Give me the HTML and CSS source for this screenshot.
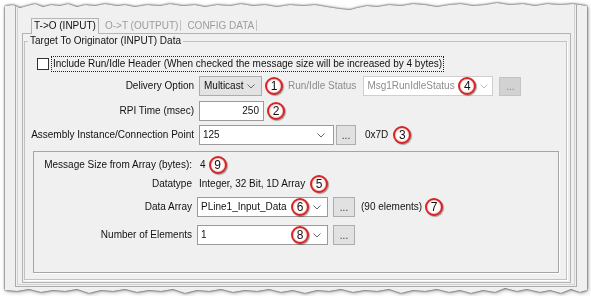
FILE: index.html
```html
<!DOCTYPE html>
<html lang="en">
<head>
    <meta charset="UTF-8">
    <title>Target To Originator (INPUT) Data</title>
    <link rel="stylesheet" href="styles.css">
</head>
<body>
    <div class="sheet">
        <div class="paper">
            <div class="frame">
                <div class="frame-in">
                    <div class="tabs">
                        <div class="tab active">T-&gt;O (INPUT)</div>
                        <div class="tab">O-&gt;T (OUTPUT)</div>
                        <div class="tab">CONFIG DATA</div>
                    </div>
                    <div class="page">
                        <fieldset class="group">
                            <legend>Target To Originator (INPUT) Data</legend>
                            <label class="check"><span class="box"></span><span class="focus">Include Run/Idle Header (When checked the message size will be increased by 4 bytes)</span></label>

                            <div class="row row-delivery">
                                <span class="lbl">Delivery Option</span>
                                <div class="combo drop w-delivery"><span class="txt">Multicast</span><svg class="chev" width="8" height="5" viewBox="0 0 8 5"><path d="M.5 .5 4 4 7.5 .5" fill="none" stroke="#666"/></svg></div>
                                <span class="num after">1</span>
                                <span class="dim">Run/Idle Status</span>
                                <div class="combo disabled w-status"><span class="txt">Msg1RunIdleStatus</span><span class="num inside">4</span><svg class="chev" width="8" height="5" viewBox="0 0 8 5"><path d="M.5 .5 4 4 7.5 .5" fill="none" stroke="#bdbdbd"/></svg></div>
                                <span class="btn disabled">...</span>
                            </div>

                            <div class="row row-rpi">
                                <span class="lbl">RPI Time (msec)</span>
                                <div class="edit w-rpi">250</div>
                                <span class="num after">2</span>
                            </div>

                            <div class="row row-assembly">
                                <span class="lbl">Assembly Instance/Connection Point</span>
                                <div class="combo w-assembly"><span class="txt">125</span><svg class="chev" width="8" height="5" viewBox="0 0 8 5"><path d="M.5 .5 4 4 7.5 .5" fill="none" stroke="#666"/></svg></div>
                                <span class="btn">...</span>
                                <span class="value hex">0x7D</span>
                                <span class="num after">3</span>
                            </div>

                            <div class="array-box">
                                <div class="row row-size">
                                    <span class="lbl inner">Message Size from Array (bytes):</span>
                                    <span class="value size">4</span>
                                    <span class="num after">9</span>
                                </div>
                                <div class="row row-type">
                                    <span class="lbl inner">Datatype</span>
                                    <span class="value type">Integer, 32 Bit, 1D Array</span>
                                    <span class="num after">5</span>
                                </div>
                                <div class="row row-array">
                                    <span class="lbl inner">Data Array</span>
                                    <div class="combo w-array"><span class="txt">PLine1_Input_Data</span><span class="num inside">6</span><svg class="chev" width="8" height="5" viewBox="0 0 8 5"><path d="M.5 .5 4 4 7.5 .5" fill="none" stroke="#666"/></svg></div>
                                    <span class="btn wide">...</span>
                                    <span class="value count">(90 elements)</span>
                                    <span class="num after">7</span>
                                </div>
                                <div class="row row-count">
                                    <span class="lbl inner">Number of Elements</span>
                                    <div class="combo w-array"><span class="txt">1</span><span class="num inside">8</span><svg class="chev" width="8" height="5" viewBox="0 0 8 5"><path d="M.5 .5 4 4 7.5 .5" fill="none" stroke="#666"/></svg></div>
                                    <span class="btn wide">...</span>
                                </div>
                            </div>
                        </fieldset>
                    </div>
                </div>
            </div>
        </div>
    </div>
</body>
</html>
```

FILE: styles.css
```css
* { box-sizing: border-box; }
body { margin: 0; background: #fff; font: 10px/12px "Liberation Sans", Arial, sans-serif; color: #111; }

/* torn screenshot sheet */
.sheet { width: 582px; height: 296px; margin-left: 5px; filter: drop-shadow(0 0 1px rgba(0, 0, 0, 0.85)) drop-shadow(1px 1px 2px rgba(0, 0, 0, 0.3)); }
.paper {
    height: 100%;
    background: #f0f0f0;
    padding: 0 10px;
    clip-path: polygon(0 6px, 8px 5px, 15px 8px, 22px 6px, 30px 4px, 38px 7px, 46px 5px, 55px 6px, 63px 4px, 72px 7px, 80px 5px, 90px 6px, 100px 4px, 112px 6px, 120px 5px, 130px 7px, 142px 5px, 155px 6px, 165px 4px, 178px 6px, 190px 5px, 200px 7px, 212px 5px, 225px 6px, 236px 4px, 248px 6px, 260px 5px, 272px 7px, 285px 5px, 298px 6px, 310px 5px, 322px 7px, 335px 9px, 345px 10px, 352px 8px, 362px 6px, 372px 7px, 384px 5px, 396px 6px, 408px 4px, 420px 5px, 432px 7px, 444px 5px, 456px 4px, 468px 6px, 480px 5px, 492px 3px, 505px 5px, 518px 4px, 530px 6px, 542px 4px, 555px 5px, 568px 4px, 582px 6px,
        582px 290px, 575px 292px, 566px 289px, 556px 293px, 545px 290px, 535px 292px, 522px 289px, 512px 291px, 500px 288px, 490px 292px, 478px 290px, 466px 293px, 455px 290px, 444px 292px, 432px 289px, 420px 291px, 408px 290px, 396px 293px, 384px 289px, 372px 291px, 360px 290px, 348px 292px, 336px 289px, 324px 291px, 312px 290px, 300px 293px, 288px 290px, 276px 292px, 264px 289px, 252px 291px, 240px 290px, 228px 292px, 216px 289px, 204px 291px, 192px 290px, 180px 293px, 168px 289px, 156px 291px, 144px 290px, 132px 292px, 120px 289px, 108px 291px, 96px 290px, 84px 293px, 72px 289px, 60px 291px, 48px 290px, 36px 292px, 24px 289px, 12px 291px, 0 290px);
}
.frame { height: 287px; border: 1px solid #ababab; padding: 1px; }
.frame-in { height: 100%; border: 1px solid #d4d4d4; display: flex; flex-direction: column; }

/* tabs */
.tabs { display: flex; align-items: flex-end; height: 30px; padding: 15px 0 0 13px; }
.tab { height: 11px; line-height: 11px; margin-bottom: 2px; padding: 0 2px 0 6px; color: #9c9c9c; border-right: 1px solid #c4c4c4; }
.tab.active { position: relative; z-index: 1; height: 16px; line-height: 14px; margin-bottom: -1px; padding: 0 2px; color: #111; background: #f0f0f0; border: 1px solid #b4b4b4; border-bottom: none; }
.page { flex: 1; margin: 0 3px 2px 4px; border: 1px solid #b4b4b4; }

/* group box */
.group { margin: 1px 3px 2px 1px; padding: 0 0 0 3px; min-width: 0; border: 1px solid #c2c2c2; box-shadow: 1px 1px 0 #fff; }
.group legend { padding: 0 2px; line-height: 12px; }

.check { display: flex; align-items: center; height: 16px; margin: 9px 0 0 9px; }
.check .box { width: 12px; height: 12px; background: #fff; border: 1px solid #333; margin-right: 2px; }
.check .focus { height: 16px; line-height: 14px; padding: 0 1px; border: 1px dotted #222; }

.row { display: flex; align-items: center; height: 20px; }
.row-delivery { margin-top: 4px; }
.row-rpi { margin-top: 5px; }
.row-assembly { margin-top: 4px; }
.lbl { width: 166px; margin-right: 5px; text-align: right; white-space: nowrap; }
.lbl.inner { width: 158px; }
.dim { margin-left: 5px; color: #8c8c8c; }
.value { white-space: nowrap; }
.hex { margin-left: 9px; }
.size { margin-left: 3px; }
.type { margin-left: 2px; }
.count { margin-left: 6px; }

/* controls */
.combo { display: flex; align-items: center; height: 20px; padding: 0 6px 0 3px; background: #fff; border: 1px solid #9b9b9b; }
.combo .txt { flex: 1; white-space: nowrap; }
.combo.drop { background: #e3e3e3; border-color: #acacac; }
.combo.disabled { margin-left: 7px; color: #8c8c8c; border-color: #cfcfcf; padding-right: 4px; }
.chev { flex: none; margin-top: 1px; }
.w-delivery { width: 63px; padding-left: 4px; }
.w-status { width: 130px; }
.w-assembly { width: 135px; padding-right: 8px; }
.w-array { width: 131px; }
.edit { width: 65px; height: 20px; line-height: 18px; padding-right: 4px; text-align: right; background: #fff; border: 1px solid #9b9b9b; }
.btn { display: flex; justify-content: center; align-items: flex-end; width: 20px; height: 20px; margin-left: 2px; padding-bottom: 4px; line-height: 8px; color: #333; background: #e1e1e1; border: 1px solid #adadad; }
.btn.wide { width: 22px; margin-left: 5px; }
.btn.disabled { width: 22px; height: 19px; margin-left: 6px; color: #8a8a8a; background: #d2d2d2; border-color: #c4c4c4; }

/* red callout numbers */
.num { display: flex; justify-content: center; align-items: center; flex: none; width: 18px; height: 18px; font-size: 12px; color: #111; background: #fff; border: 2px solid #d82424; border-radius: 50%; box-shadow: 1px 1px 1px rgba(0, 0, 0, 0.35), inset 0 0 2px rgba(216, 36, 36, 0.55); }
.num.after { margin-left: 3px; }
.num.inside { margin-right: 4px; }
.row-assembly .num.after, .row-type .num.after { margin-left: 5px; }

/* inner array box */
.array-box { height: 122px; margin: 6px 7px 6px 5px; padding-top: 5px; border: 1px solid #a5a5a5; box-shadow: 1px 1px 0 #fff; }
.row-size, .row-type { height: 16px; }
.row-type { margin-top: 3px; }
.row-array { margin-top: 5px; }
.row-count { margin-top: 8px; }
```
